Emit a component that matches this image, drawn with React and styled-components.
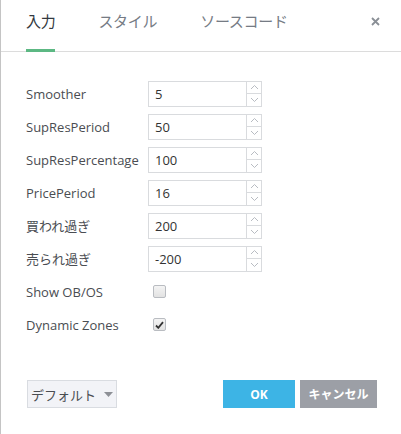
import React from 'react';
import styled, { createGlobalStyle } from 'styled-components';

const Global = createGlobalStyle`
  html, body { margin: 0; padding: 0; background: #fff; }
  body { font-family: "Open Sans", "Noto Sans CJK JP", sans-serif; }
`;

const Dialog = styled.div`
  width: 401px;
  height: 434px;
  box-sizing: border-box;
  border-left: 1px solid #c4c4c4;
  background: #fff;
  display: flex;
  flex-direction: column;
`;

const Header = styled.div`
  display: flex;
  align-items: flex-end;
  height: 52px;
  border-bottom: 1px solid #dcdcdc;
  padding: 0 20px 0 25px;
  box-sizing: border-box;
`;

const Tab = styled.div`
  font-size: 15px;
  color: ${p => (p.active ? '#333940' : '#757b84')};
  padding-bottom: 18px;
  margin-right: 43px;
  border-bottom: 3px solid ${p => (p.active ? '#5cb883' : 'transparent')};
  margin-bottom: -1px;
  line-height: 20px;
  letter-spacing: -0.3px;
`;

const Close = styled.div`
  margin-left: auto;
  align-self: flex-start;
  margin-top: 17px;
  margin-right: 1px;
  display: flex;
`;

const Body = styled.div`
  flex: 1;
  padding: 25px 0 0 25px;
  display: flex;
  flex-direction: column;
`;

const Row = styled.div`
  display: flex;
  align-items: center;
  height: 33px;
`;

const Label = styled.div`
  width: 122px;
  font-size: 13px;
  color: #4a4d52;
`;

const Field = styled.div`
  display: flex;
  width: 114px;
  height: 26px;
  box-sizing: border-box;
  border: 1px solid #d9dbde;
`;

const Value = styled.div`
  flex: 1;
  font-size: 13px;
  color: #333;
  padding-left: 6px;
  line-height: 24px;
`;

const Spin = styled.div`
  width: 14px;
  border-left: 1px solid #d9dbde;
  display: flex;
  flex-direction: column;
`;

const SpinHalf = styled.div`
  flex: 1;
  display: flex;
  align-items: center;
  justify-content: center;
  & + & { border-top: 1px solid #d9dbde; }
`;

const Check = styled.div`
  width: 11px;
  height: 11px;
  margin-left: 5px;
  border: 1px solid #b9bcc1;
  border-radius: 2px;
  background: linear-gradient(#f4f4f4, #e2e2e2);
  display: flex;
  align-items: center;
  justify-content: center;
`;

const Footer = styled.div`
  display: flex;
  align-items: center;
  padding: 0 24px 26px 26px;
`;

const DefaultBtn = styled.div`
  height: 28px;
  width: 90px;
  box-sizing: border-box;
  border: 1px solid #d9dce1;
  background: #f2f3f7;
  display: flex;
  align-items: center;
  justify-content: center;
  gap: 8px;
  font-size: 13px;
  color: #4a4d52;
`;

const Btn = styled.div`
  height: 28px;
  width: ${p => p.w}px;
  margin-left: ${p => p.ml}px;
  background: ${p => p.bg};
  color: #fff;
  font-weight: bold;
  font-size: 12px;
  display: flex;
  align-items: center;
  justify-content: center;
`;

const Arrow = ({ up }) => (
  <svg width="9" height="6" viewBox="0 0 9 6">
    <path d={up ? 'M1 5 L4.5 1.5 L8 5' : 'M1 1 L4.5 4.5 L8 1'} fill="none" stroke="#b8bcc2" strokeWidth="1" />
  </svg>
);

const NumberField = ({ value }) => (
  <Field>
    <Value>{value}</Value>
    <Spin>
      <SpinHalf><Arrow up /></SpinHalf>
      <SpinHalf><Arrow /></SpinHalf>
    </Spin>
  </Field>
);

const inputs = [
  ['Smoother', '5'],
  ['SupResPeriod', '50'],
  ['SupResPercentage', '100'],
  ['PricePeriod', '16'],
  ['買われ過ぎ', '200'],
  ['売られ過ぎ', '-200'],
];

export default function App() {
  return (
    <>
      <Global />
      <Dialog>
        <Header>
          <Tab active>入力</Tab>
          <Tab>スタイル</Tab>
          <Tab>ソースコード</Tab>
          <Close>
            <svg width="9" height="9" viewBox="0 0 9 9">
              <path d="M1 1 L8 8 M8 1 L1 8" stroke="#8a8f96" strokeWidth="1.8" />
            </svg>
          </Close>
        </Header>
        <Body>
          {inputs.map(([l, v]) => (
            <Row key={l}>
              <Label>{l}</Label>
              <NumberField value={v} />
            </Row>
          ))}
          <Row>
            <Label>Show OB/OS</Label>
            <Check />
          </Row>
          <Row>
            <Label>Dynamic Zones</Label>
            <Check>
              <svg width="9" height="8" viewBox="0 0 9 8">
                <path d="M1 4.5 L3.3 6.8 L8 1.2" fill="none" stroke="#333" strokeWidth="1.8" />
              </svg>
            </Check>
          </Row>
        </Body>
        <Footer>
          <DefaultBtn>
            デフォルト
            <svg width="9" height="5" viewBox="0 0 9 5"><path d="M0 0 L9 0 L4.5 5 Z" fill="#8d9096" /></svg>
          </DefaultBtn>
          <Btn w={72} ml={106} bg="#3db4e5">OK</Btn>
          <Btn w={77} ml={5} bg="#9c9fa6">キャンセル</Btn>
        </Footer>
      </Dialog>
    </>
  );
}
